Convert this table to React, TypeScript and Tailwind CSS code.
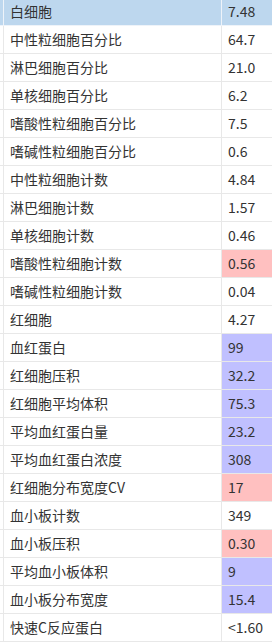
import React from "react";

type Row = {
  name: string;
  value: string;
  tone?: "head" | "high" | "low";
};

const ROWS: Row[] = [
  { name: "白细胞", value: "7.48", tone: "head" },
  { name: "中性粒细胞百分比", value: "64.7" },
  { name: "淋巴细胞百分比", value: "21.0" },
  { name: "单核细胞百分比", value: "6.2" },
  { name: "嗜酸性粒细胞百分比", value: "7.5" },
  { name: "嗜碱性粒细胞百分比", value: "0.6" },
  { name: "中性粒细胞计数", value: "4.84" },
  { name: "淋巴细胞计数", value: "1.57" },
  { name: "单核细胞计数", value: "0.46" },
  { name: "嗜酸性粒细胞计数", value: "0.56", tone: "high" },
  { name: "嗜碱性粒细胞计数", value: "0.04" },
  { name: "红细胞", value: "4.27" },
  { name: "血红蛋白", value: "99", tone: "low" },
  { name: "红细胞压积", value: "32.2", tone: "low" },
  { name: "红细胞平均体积", value: "75.3", tone: "low" },
  { name: "平均血红蛋白量", value: "23.2", tone: "low" },
  { name: "平均血红蛋白浓度", value: "308", tone: "low" },
  { name: "红细胞分布宽度CV", value: "17", tone: "high" },
  { name: "血小板计数", value: "349" },
  { name: "血小板压积", value: "0.30", tone: "high" },
  { name: "平均血小板体积", value: "9", tone: "low" },
  { name: "血小板分布宽度", value: "15.4", tone: "low" },
  { name: "快速C反应蛋白", value: "<1.60" },
];

const VALUE_BG: Record<string, string> = {
  high: "bg-[#ffc0c0]",
  low: "bg-[#c0c0ff]",
};

export default function App() {
  return (
    <div className="w-[272px] h-[643px] overflow-hidden bg-white text-[14px] text-[#333] font-['Microsoft_YaHei','Noto_Sans_CJK_SC',sans-serif]">
      <div className="-mt-[2px]">
        {ROWS.map((row) => {
          const head = row.tone === "head";
          return (
            <div
              key={row.name}
              className={`grid grid-cols-[4px_218px_1fr] h-[28px] border-b border-[#e8e8e8] ${
                head ? "bg-[#bdd7ee] border-b-[#eef3f9]" : ""
              }`}
            >
              <div className={`border-r ${head ? "border-[#eef3f9]" : "border-[#e8e8e8]"}`} />
              <div
                className={`flex items-center pl-[6px] border-r ${
                  head ? "border-[#eef3f9]" : "border-[#e8e8e8]"
                }`}
              >
                {row.name}
              </div>
              <div
                className={`flex items-center pl-[6px] ${
                  row.tone && !head ? VALUE_BG[row.tone] : ""
                }`}
              >
                {row.value}
              </div>
            </div>
          );
        })}
      </div>
    </div>
  );
}
